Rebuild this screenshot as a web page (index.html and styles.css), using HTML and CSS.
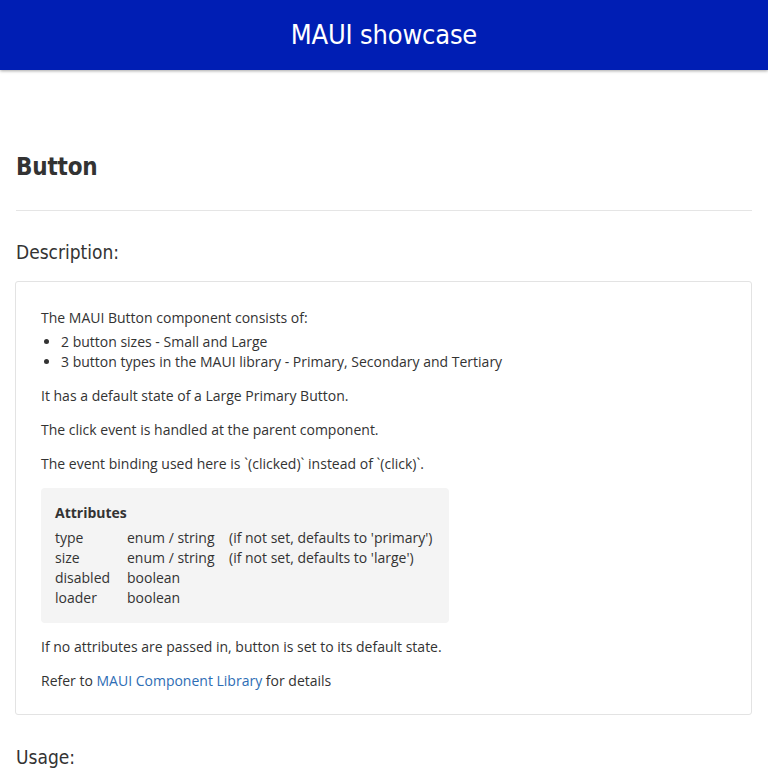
FILE: index.html
```html
<!DOCTYPE html>
<html>
<head>
<meta charset="utf-8">
<link rel="stylesheet" href="styles.css">
</head>
<body>
<header class="topbar"><h1 class="brand">MAUI showcase</h1></header>
<main class="content">
  <h2 class="page-title">Button</h2>
  <hr class="divider">
  <h3 class="section-title">Description:</h3>
  <section class="card">
    <p class="tight">The MAUI Button component consists of:</p>
    <ul class="list">
      <li>2 button sizes - Small and Large</li>
      <li>3 button types in the MAUI library - Primary, Secondary and Tertiary</li>
    </ul>
    <p>It has a default state of a Large Primary Button.</p>
    <p>The click event is handled at the parent component.</p>
    <p>The event binding used here is `(clicked)` instead of `(click)`.</p>
    <div class="attrs">
      <div class="attrs-title">Attributes</div>
      <div class="attrs-grid">
        <span>type</span><span>enum / string</span><span>(if not set, defaults to 'primary')</span>
        <span>size</span><span>enum / string</span><span>(if not set, defaults to 'large')</span>
        <span>disabled</span><span>boolean</span><span></span>
        <span>loader</span><span>boolean</span><span></span>
      </div>
    </div>
    <p>If no attributes are passed in, button is set to its default state.</p>
    <p class="last">Refer to <a class="link" href="#">MAUI Component Library</a> for details</p>
  </section>
  <h3 class="section-title usage">Usage:</h3>
</main>
</body>
</html>
```
FILE: styles.css
```css
* { box-sizing: border-box; }
html, body { margin: 0; padding: 0; }
body {
  font-family: "Open Sans", "DejaVu Sans", sans-serif;
  font-size: 14px;
  line-height: 20px;
  color: #333;
  background: #fff;
}
.topbar {
  height: 70px;
  background: #001eb4;
  box-shadow: 0 1px 3px rgba(0,0,0,0.35);
  display: flex;
  align-items: center;
  justify-content: center;
}
.brand {
  margin: 0;
  color: #fff;
  font-family: "DejaVu Sans Condensed", "DejaVu Sans", sans-serif;
  font-weight: normal;
  font-size: 27px;
  letter-spacing: -0.2px;
}
.content { padding: 0 16px 0 16px; }
.page-title {
  margin: 0;
  padding-top: 80px;
  font-family: "DejaVu Sans Condensed", "DejaVu Sans", sans-serif;
  font-size: 24px;
  line-height: 34px;
  font-weight: bold;
  color: #333;
  letter-spacing: -0.2px;
}
.divider {
  border: 0;
  border-top: 1px solid #e5e5e5;
  margin: 26px 0 0 0;
}
.section-title {
  margin: 28px 0 0 0;
  font-family: "DejaVu Sans Condensed", "DejaVu Sans", sans-serif;
  font-weight: normal;
  font-size: 19px;
  line-height: 26px;
  color: #333;
}
.card {
  margin: 16px 0 0 -1px;
  border: 1px solid #e3e3e3;
  border-radius: 3px;
  padding: 26px 24px 23px 25px;
}
.card p { margin: 0 0 14px 0; }
.card p.tight { margin: 0; }
.card p.last { margin: 0; }
.list { margin: 4px 0 14px 0; padding-left: 20px; }
.link { color: #2d6db5; text-decoration: none; }
.attrs {
  background: #f4f4f4;
  border-radius: 4px;
  width: 408px;
  padding: 15px 14px 15px 14px;
  margin: 0 0 14px 0;
}
.attrs-title { font-weight: bold; margin-bottom: 5px; }
.attrs-grid {
  display: grid;
  grid-template-columns: 72px 102px auto;
}
.usage { margin-top: 29px; }
```
